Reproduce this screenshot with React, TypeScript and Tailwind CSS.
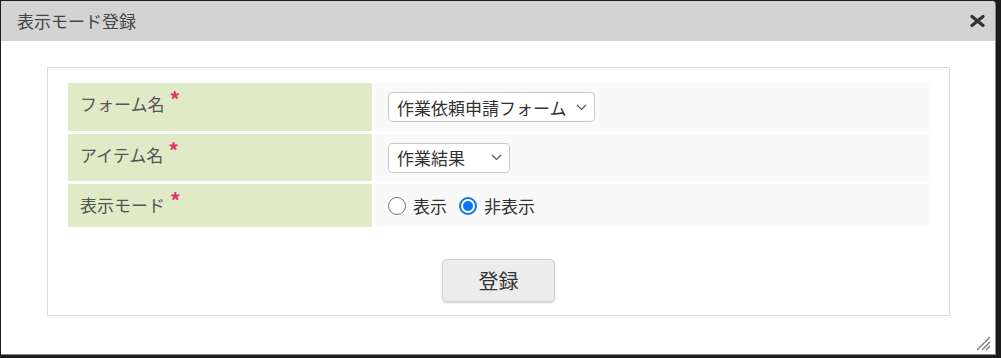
import React from 'react';

const font = { fontFamily: '"Noto Sans CJK JP", "Noto Sans", sans-serif' };

function Required() {
  return <span className="relative -top-[3px] ml-[5px] text-[21px] font-bold leading-none text-[#e3306c]">*</span>;
}

function Chevron() {
  return (
    <svg width="11" height="7" viewBox="0 0 11 7" className="shrink-0">
      <path d="M1 1l4.5 4.5L10 1" fill="none" stroke="#555" strokeWidth="1.2" />
    </svg>
  );
}

function FakeSelect({ value, width }: { value: string; width: string }) {
  return (
    <div
      className={`flex h-[30px] items-center justify-between rounded-[4px] border border-[#c9c9c9] bg-white pl-[8px] pr-[7px] text-[17px] text-[#333] ${width}`}
    >
      <span className="leading-none">{value}</span>
      <Chevron />
    </div>
  );
}

function Radio({ checked, label }: { checked?: boolean; label: string }) {
  return (
    <label className="flex items-center gap-[7px]">
      {checked ? (
        <span className="flex h-[18px] w-[18px] items-center justify-center rounded-full border-[2px] border-[#0b74f5] bg-white">
          <span className="h-[10px] w-[10px] rounded-full bg-[#0b74f5]" />
        </span>
      ) : (
        <span className="h-[18px] w-[18px] rounded-full border border-[#777] bg-white" />
      )}
      <span className="text-[17px] text-[#333]">{label}</span>
    </label>
  );
}

export default function App() {
  const rows = [
    { label: 'フォーム名', h: 'h-[48px]', value: <FakeSelect value="作業依頼申請フォーム" width="w-[207px]" /> },
    { label: 'アイテム名', h: 'h-[47px]', value: <FakeSelect value="作業結果" width="w-[122px]" /> },
    {
      label: '表示モード',
      h: 'h-[43px]',
      value: (
        <div className="flex items-center gap-[12px]">
          <Radio label="表示" />
          <Radio checked label="非表示" />
        </div>
      ),
    },
  ];

  return (
    <div className="h-[358px] w-[1001px] bg-[#1c1c1c] pb-[3px] pl-px pr-[5px] pt-px" style={font}>
      <div className="relative flex h-full w-full flex-col overflow-hidden rounded-tr-[4px] border-b border-r border-[#8a8a8a] bg-white">
        <div className="flex h-[40px] shrink-0 items-center justify-between bg-[#d3d3d3] pl-[16px] pr-[10px]">
          <span className="text-[17px] text-[#444]">表示モード登録</span>
          <svg width="15" height="12" viewBox="0 0 15 12">
            <path d="M2 1.5l11 9M13 1.5l-11 9" stroke="#333" strokeWidth="3.2" strokeLinecap="round" />
          </svg>
        </div>

        <div className="ml-[46px] mr-[45px] mt-[26px] border border-[#dcdcdc] px-[20px] pb-[13px] pt-[15px]">
          <div className="grid grid-cols-[304px_1fr] gap-x-[3px] gap-y-[3px]">
            {rows.map((r) => (
              <React.Fragment key={r.label}>
                <div className={`${r.h} bg-[#e0eac7] pl-[12px] pt-[9px] text-[17px] leading-[24px] text-[#555]`}>
                  {r.label}
                  <Required />
                </div>
                <div className={`${r.h} flex items-center bg-[#f9f9f9] pl-[13px]`}>{r.value}</div>
              </React.Fragment>
            ))}
          </div>

          <div className="mt-[32px] flex justify-center">
            <button className="h-[43px] w-[113px] rounded-[5px] border border-[#d0d0d0] bg-[#ececec] text-[20px] text-[#333] shadow-[0_1px_2px_rgba(0,0,0,0.18)]">
              登録
            </button>
          </div>
        </div>

        <svg width="16" height="16" viewBox="0 0 16 16" className="absolute bottom-[3px] right-[4px]">
          <path d="M15 2L2 15M15 7L7 15M15 11L11 15" stroke="#777" strokeWidth="1.3" />
        </svg>
      </div>
    </div>
  );
}
